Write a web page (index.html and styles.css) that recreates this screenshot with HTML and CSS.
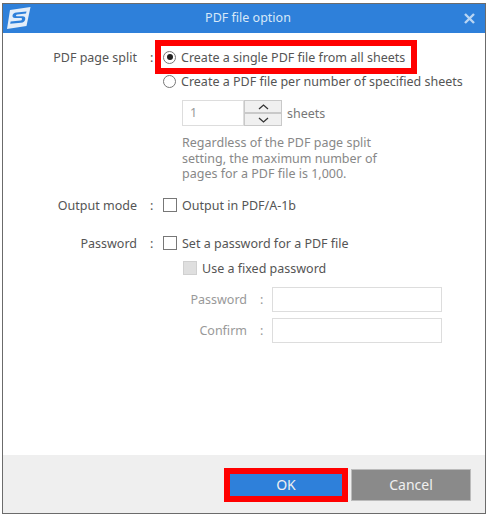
FILE: index.html
```html
<!DOCTYPE html>
<html lang="en">
<head>
    <meta charset="UTF-8">
    <meta name="viewport" content="width=device-width, initial-scale=1.0">
    <title>PDF file option</title>
    <link rel="stylesheet" href="styles.css">
</head>
<body>

    <div class="window">
        <div class="title-bar">
            <svg class="logo" width="24" height="22" viewBox="0 0 24 22">
                <path d="M3 3 L23.5 0 L19.5 19 L0 22 Z" fill="#e4eef9"/>
                <path d="M19.5 4.5 L9.5 5.6 Q6 6 5.5 8.6 Q5.2 11 8 11 L14 11 Q15.2 11 15 12.2 Q14.8 13.4 13.6 13.5 L3.6 14.6 L3.2 16.8 L14 15.8 Q17.6 15.4 18.2 12.4 Q18.7 9.2 15.6 9.2 L9.8 9.2 Q8.8 9.2 9 8.4 Q9.2 7.6 10.2 7.5 L19 6.6 Z" fill="#2e80da"/>
            </svg>
            <span class="title">PDF file option</span>
            <svg class="close" width="11" height="11" viewBox="0 0 11 11">
                <path d="M1 1 L10 10 M10 1 L1 10" stroke="#b9d5f3" stroke-width="2.4"/>
            </svg>
        </div>

        <div class="content">
            <div class="option-row split-row">
                <div class="label">PDF page split</div>
                <div class="colon">:</div>
                <div class="field">
                    <label class="choice"><span class="radio checked"></span>Create a single PDF file from all sheets</label>
                    <label class="choice"><span class="radio"></span>Create a PDF file per number of specified sheets</label>
                    <div class="sheets">
                        <div class="sheet-input">1</div>
                        <div class="spinner">
                            <div class="spin-btn">
                                <svg width="11" height="6" viewBox="0 0 11 6"><path d="M1 5 L5.5 1 L10 5" fill="none" stroke="#333" stroke-width="1.3"/></svg>
                            </div>
                            <div class="spin-btn">
                                <svg width="11" height="6" viewBox="0 0 11 6"><path d="M1 1 L5.5 5 L10 1" fill="none" stroke="#333" stroke-width="1.3"/></svg>
                            </div>
                        </div>
                        <span class="sheets-text">sheets</span>
                    </div>
                    <p class="note">Regardless of the PDF page split<br>setting, the maximum number of<br>pages for a PDF file is 1,000.</p>
                </div>
            </div>

            <div class="option-row mode-row">
                <div class="label">Output mode</div>
                <div class="colon">:</div>
                <div class="field">
                    <label class="choice"><span class="check"></span>Output in PDF/A-1b</label>
                </div>
            </div>

            <div class="option-row password-row">
                <div class="label">Password</div>
                <div class="colon">:</div>
                <div class="field">
                    <label class="choice"><span class="check"></span>Set a password for a PDF file</label>
                    <label class="choice fixed"><span class="check disabled"></span>Use a fixed password</label>
                    <div class="pass-row">
                        <span class="pass-label">Password</span>
                        <span class="pass-colon">:</span>
                        <div class="pass-input"></div>
                    </div>
                    <div class="pass-row">
                        <span class="pass-label">Confirm</span>
                        <span class="pass-colon">:</span>
                        <div class="pass-input"></div>
                    </div>
                </div>
            </div>
        </div>

        <div class="footer">
            <div class="ok-mark"><button class="btn ok-btn">OK</button></div>
            <button class="btn cancel-btn">Cancel</button>
        </div>

        <div class="mark-box"></div>
    </div>

</body>
</html>
```

FILE: styles.css
```css
html, body {
    margin: 0;
    padding: 0;
    background: #fff;
}
body {
    font-family: "Noto Sans", Arial, sans-serif;
    font-size: 12.5px;
    color: #555;
    padding: 3px 0 0 2px;
}
.window {
    position: relative;
    box-sizing: border-box;
    width: 484px;
    height: 511px;
    border: 1px solid #6b6b6b;
    display: flex;
    flex-direction: column;
    background: #fff;
}
.title-bar {
    box-sizing: border-box;
    height: 29px;
    background: #2e80da;
    display: flex;
    align-items: center;
    justify-content: center;
    position: relative;
    color: #d8e8f8;
    flex-shrink: 0;
    padding: 0 0 3px 8px;
}
.logo {
    position: absolute;
    left: 4px;
    top: 3px;
}
.close {
    position: absolute;
    right: 10px;
    top: 9px;
}
.content {
    flex: 1;
    padding-top: 15px;
}
.option-row {
    display: flex;
}
.label {
    width: 134px;
    text-align: right;
    line-height: 18px;
    padding-top: 1px;
}
.colon {
    width: 26px;
    padding-left: 13px;
    box-sizing: border-box;
    line-height: 18px;
    padding-top: 1px;
}
.field {
    flex: 1;
}
.choice {
    display: flex;
    align-items: center;
    height: 18px;
    margin-bottom: 6px;
    white-space: nowrap;
}
.radio {
    box-sizing: border-box;
    width: 13px;
    height: 13px;
    border: 1px solid #777;
    border-radius: 50%;
    margin-right: 5px;
    position: relative;
    flex-shrink: 0;
}
.radio.checked::after {
    content: "";
    position: absolute;
    left: 2.5px;
    top: 2.5px;
    width: 6px;
    height: 6px;
    border-radius: 50%;
    background: #222;
}
.check {
    box-sizing: border-box;
    width: 14px;
    height: 14px;
    border: 1px solid #777;
    margin-right: 5px;
    flex-shrink: 0;
}
.check.disabled {
    background: #dfdfdf;
    border-color: #d0d0d0;
}
.sheets {
    display: flex;
    align-items: center;
    margin: 10px 0 0 19px;
    color: #777;
}
.sheet-input {
    box-sizing: border-box;
    width: 62px;
    height: 26px;
    border: 1px solid #ddd;
    padding-left: 7px;
    line-height: 24px;
    color: #999;
}
.spinner {
    width: 38px;
    height: 26px;
    display: flex;
    flex-direction: column;
    gap: 2px;
    background: #c9c9c9;
    box-sizing: border-box;
    border: 1px solid #c9c9c9;
    margin-right: 5px;
}
.spin-btn {
    flex: 1;
    background: #f0f0f0;
    display: flex;
    align-items: center;
    justify-content: center;
}
.note {
    margin: 9px 0 0 19px;
    line-height: 15.5px;
    color: #888;
}
.mode-row {
    margin-top: 14.5px;
}
.password-row {
    margin-top: 14px;
}
.fixed {
    margin: 7px 0 10px 20px;
}
.pass-row {
    display: flex;
    align-items: center;
    height: 25px;
    margin-bottom: 6px;
    color: #999;
}
.pass-label {
    width: 84px;
    text-align: right;
}
.pass-colon {
    width: 25px;
    padding-left: 13px;
    box-sizing: border-box;
}
.pass-input {
    box-sizing: border-box;
    width: 170px;
    height: 25px;
    border: 1px solid #ddd;
}
.footer {
    box-sizing: border-box;
    height: 58px;
    background: #efefef;
    display: flex;
    align-items: center;
    justify-content: flex-end;
    padding: 2px 14px 0 0;
    gap: 3px;
    flex-shrink: 0;
}
.btn {
    font-family: inherit;
    font-size: 14px;
    border: none;
    color: #f0f0f0;
    padding: 0 0 2px;
}
.ok-mark {
    border: 6px solid #f00;
}
.ok-btn {
    display: block;
    width: 112px;
    height: 22px;
    background: #2e80da;
}
.cancel-btn {
    width: 120px;
    height: 32px;
    background: #8a8a8a;
    border: 1px solid #bbb;
}
/* red annotation box over the first radio */
.mark-box {
    position: absolute;
    left: 152px;
    top: 36px;
    width: 250px;
    height: 22px;
    border: 6px solid #f00;
}
```
